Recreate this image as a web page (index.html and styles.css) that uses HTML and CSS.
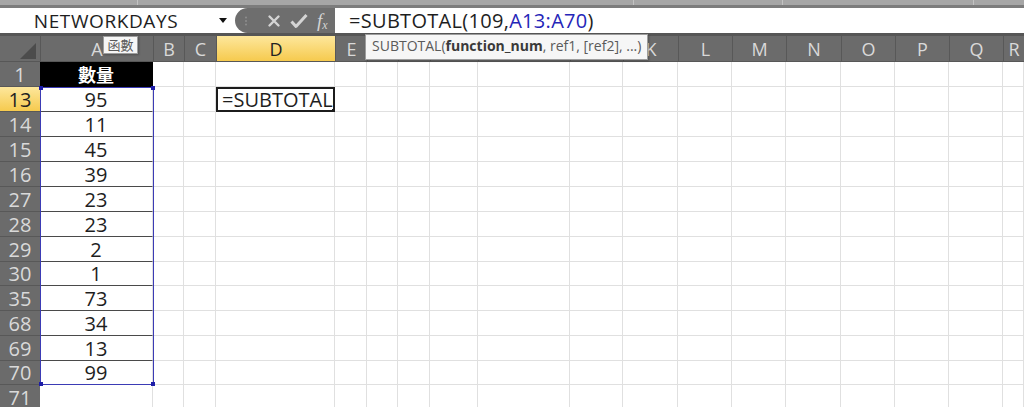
FILE: index.html
```html
<!DOCTYPE html>
<html lang="zh-Hant">
<head>
    <meta charset="UTF-8">
    <meta name="viewport" content="width=device-width, initial-scale=1.0">
    <title>SUBTOTAL</title>
    <link rel="stylesheet" href="styles.css">
</head>
<body>
    <!-- bottom edge of the ribbon -->
    <div class="ribbon-edge">
        <span class="seg-1"></span>
        <span class="seg-2"></span>
        <span class="seg-3"></span>
        <span class="seg-4"></span>
    </div>

    <div class="formula-bar">
        <div class="name-box">
            <span class="name">NETWORKDAYS</span>
            <svg class="drop" width="8" height="5" viewBox="0 0 8 5"><path d="M0 0h8L4 5z" fill="#111"/></svg>
        </div>
        <div class="fx-buttons">
            <svg class="grip" width="4" height="10" viewBox="0 0 4 10">
                <circle cx="2" cy="1.5" r="1" fill="#8e8e8e"/>
                <circle cx="2" cy="5" r="1" fill="#8e8e8e"/>
                <circle cx="2" cy="8.5" r="1" fill="#8e8e8e"/>
            </svg>
            <svg class="btn" width="14" height="14" viewBox="0 0 14 14">
                <path d="M2.5 2.5l9 9M11.5 2.5l-9 9" stroke="#d4d4d4" stroke-width="2.4" stroke-linecap="round"/>
            </svg>
            <svg class="btn" width="18" height="16" viewBox="0 0 18 16">
                <path d="M1.5 8.5l4.5 5L16.5 2" fill="none" stroke="#d4d4d4" stroke-width="3" stroke-linejoin="round"/>
            </svg>
            <span class="fx"><i>f</i><span>x</span></span>
        </div>
        <div class="formula">=SUBTOTAL(109,<span class="ref">A13:A70</span>)</div>
    </div>

    <div class="sheet" id="sheet">
        <div class="corner">
            <svg width="40" height="26" viewBox="0 0 40 26"><path d="M36 7v16H20z" fill="#4c4c4c"/></svg>
        </div>
        <!-- headers and rows are filled in by script.js -->
        <div class="range"><i class="h tl"></i><i class="h tr"></i><i class="h bl"></i><i class="h br"></i></div>
    </div>

    <div class="tip tip-name">函數</div>
    <div class="tip tip-args">SUBTOTAL(<b>function_num</b>, ref1, [ref2], ...)</div>

    <script src="script.js"></script>
</body>
</html>
```

FILE: styles.css
```css
body {
    margin: 0;
    position: relative;
    width: 1024px;
    height: 407px;
    overflow: hidden;
    background: #fff;
    font-family: 'Open Sans', 'Noto Sans CJK TC', sans-serif;
    color: #1e1e1e;
}

/* ribbon edge */
.ribbon-edge {
    display: flex;
    height: 5px;
    background: #a6a6a6;
    border-bottom: 3px solid #7c7c7c;
}

.ribbon-edge span {
    border-right: 1px solid #c2c2c2;
}

.seg-1 { width: 137px; }
.seg-2 { width: 495px; }
.seg-3 { width: 148px; }
.seg-4 { width: 190px; }

/* formula bar */
.formula-bar {
    display: flex;
    height: 25px;
    background: #fff;
}

.name-box {
    width: 232px;
    display: flex;
    align-items: center;
}

.name {
    width: 212px;
    text-align: center;
    font-size: 19px;
    letter-spacing: 0.6px;
}

.drop {
    margin-left: 7px;
}

.fx-buttons {
    width: 100px;
    margin-left: 3px;
    background: #6e6e6e;
    border-radius: 13px 0 0 13px;
    display: flex;
    align-items: center;
}

.grip {
    margin-left: 9px;
}

.fx-buttons .btn:nth-of-type(2) {
    margin-left: 19px;
}

.fx-buttons .btn:nth-of-type(3) {
    margin-left: 9px;
}

.fx {
    margin-left: 9px;
    color: #d4d4d4;
    font-family: 'Liberation Serif', serif;
    font-style: italic;
    font-size: 18px;
}

.fx i {
    font-size: 19px;
}

.fx span {
    font-size: 12px;
    position: relative;
    top: 2px;
}

.formula {
    flex: 1;
    padding-left: 14px;
    font-size: 20px;
    line-height: 25px;
    letter-spacing: 0.3px;
    white-space: nowrap;
}

.formula .ref {
    color: #2525b8;
}

/* sheet grid: row header, then columns A to R */
.sheet {
    position: relative;
    display: grid;
    grid-template-columns: 40px 113px 31px 32px 119px 32px 31px 32px 48px 92px 53px 55px 54px 54px 55px 54px 54px 54px 21px;
    grid-template-rows: 26px 25px 25px 25px 25px 25px 25px 25px 25px 24px 25px 25px 25px 24px 25px;
    border-top: 3px solid #565656;
}

.corner {
    background: #6b6b6b;
    border-bottom: 1px solid #575757;
}

.corner svg {
    display: block;
}

.ch,
.rh,
.cell {
    box-sizing: border-box;
    display: flex;
    align-items: center;
    justify-content: center;
    white-space: nowrap;
    overflow: hidden;
}

.ch {
    background: #6b6b6b;
    color: #d9d9d9;
    font-size: 18px;
    padding-top: 1px;
    border-left: 1px solid #585858;
    border-bottom: 1px solid #575757;
}

.rh {
    background: #6b6b6b;
    color: #d9d9d9;
    font-size: 20px;
    border-bottom: 1px solid #585858;
}

.ch.current,
.rh.current {
    background: linear-gradient(#fde79c, #f6ca4e);
    color: #222;
}

.cell {
    font-size: 20px;
    border-right: 1px solid #e0e0e0;
    border-bottom: 1px solid #e0e0e0;
}

.cell.title {
    background: #000;
    color: #fff;
    font-weight: bold;
    font-size: 18px;
    border-color: #000;
}

.cell.data {
    border-bottom-color: #4a4a4a;
}

/* cell being edited */
.cell.editing {
    position: relative;
    overflow: visible;
}

.editor {
    position: absolute;
    left: 0;
    top: 0;
    right: -1px;
    bottom: -1px;
    border: 2px solid #1c1c1c;
    background: #fff;
    padding-left: 4px;
    overflow: hidden;
    white-space: nowrap;
    font-size: 20px;
    line-height: 22px;
}

.editor::after {
    content: '';
    position: absolute;
    right: -3px;
    bottom: -3px;
    width: 4px;
    height: 4px;
    background: #1c1c1c;
}

/* referenced range A13:A70 */
.range {
    position: absolute;
    left: 40px;
    top: 51px;
    width: 114px;
    height: 298px;
    box-sizing: border-box;
    border: 1px solid #3b3bb5;
    pointer-events: none;
}

.range .h {
    position: absolute;
    width: 4px;
    height: 4px;
    background: #1d1da8;
}

.range .tl { left: -2px; top: -2px; }
.range .tr { right: -2px; top: -2px; }
.range .bl { left: -2px; bottom: -2px; }
.range .br { right: -2px; bottom: -2px; }

/* tooltips */
.tip {
    position: absolute;
    box-sizing: border-box;
    background: #f6f6f6;
    border: 1px solid #9d9d9d;
    color: #5a5a5a;
    box-shadow: 1px 1px 2px rgba(0,0,0,0.25);
    white-space: nowrap;
}

.tip-name {
    left: 103px;
    top: 36px;
    width: 35px;
    height: 18px;
    font-size: 13px;
    line-height: 16px;
    text-align: center;
}

.tip-args {
    left: 365px;
    top: 34px;
    width: 283px;
    height: 26px;
    padding-left: 6px;
    font-size: 14px;
    line-height: 22px;
}

.tip-args b {
    color: #3a3a3a;
}
```

FILE: script.js
```js
const sheet = document.getElementById('sheet');
const range = sheet.querySelector('.range');

const letters = 'ABCDEFGHIJKLMNOPQR'.split('');
const rows = [
    [1, '數量'], [13, 95], [14, 11], [15, 45], [16, 39], [27, 23], [28, 23],
    [29, 2], [30, 1], [35, 73], [68, 34], [69, 13], [70, 99], [71, '']
];

function make(cls, text) {
    const el = document.createElement('div');
    el.className = cls;
    if (text !== undefined) el.textContent = text;
    sheet.insertBefore(el, range);
    return el;
}

// column headers, D is the active column
letters.forEach(l => make(l === 'D' ? 'ch current' : 'ch', l));

rows.forEach(([num, value]) => {
    make(num === 13 ? 'rh current' : 'rh', num);

    letters.forEach(l => {
        let cls = 'cell';
        let text = '';
        if (l === 'A') {
            text = value;
            if (num === 1) cls += ' title';
            else if (num <= 70) cls += ' data';
        }
        const cell = make(cls, text);

        if (l === 'D' && num === 13) {
            cell.classList.add('editing');
            const editor = document.createElement('div');
            editor.className = 'editor';
            editor.textContent = '=SUBTOTAL(';
            cell.appendChild(editor);
        }
    });
});
```
